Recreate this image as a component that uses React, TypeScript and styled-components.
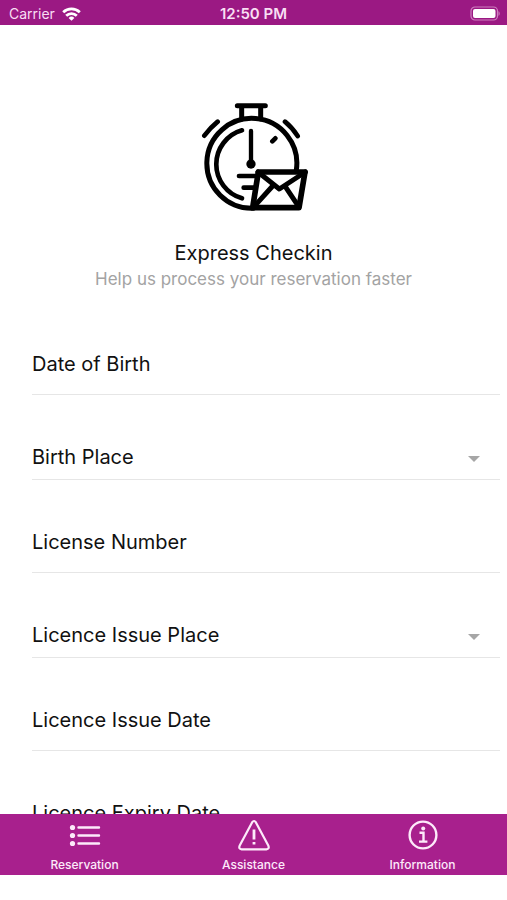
import React from 'react';
import styled, { createGlobalStyle } from 'styled-components';

const GlobalStyle = createGlobalStyle`
  *, *::before, *::after { box-sizing: border-box; }
  body {
    margin: 0;
    background: #fff;
    color: #111;
    font-family: Inter, "Liberation Sans", sans-serif;
  }
`;

const Screen = styled.div`
  display: flex;
  flex-direction: column;
  height: 100vh;
  padding-bottom: 25px;
`;

const StatusBar = styled.header`
  display: grid;
  grid-template-columns: 1fr auto 1fr;
  align-items: center;
  flex: none;
  height: 25px;
  padding: 2px 7px 0;
  background: #9b1983;
  color: #f8dff3;
  font-size: 14px;
  line-height: 20px;
`;

const Carrier = styled.div`
  display: flex;
  align-items: center;
  gap: 7px;
  padding-left: 2px;
`;

const Clock = styled.time`
  font-size: 15px;
  font-weight: 600;
`;

const BatteryIcon = styled.svg`
  justify-self: end;
`;

const Content = styled.main`
  flex: 1;
  min-height: 0;
  overflow: hidden auto;
  scrollbar-width: none;
  padding-top: 77px;
`;

const Intro = styled.section`
  display: flex;
  flex-direction: column;
  align-items: center;
  text-align: center;
`;

const Title = styled.h1`
  margin: 28px 0 0;
  font-size: 20px;
  font-weight: 400;
  line-height: 26px;
`;

const Subtitle = styled.p`
  margin: 0;
  color: #a3a3a3;
  font-size: 17px;
  line-height: 26px;
`;

const Form = styled.form`
  padding: 10px 7px 0 32px;
`;

const Field = styled.div<{ $compact?: boolean }>`
  display: flex;
  align-items: center;
  padding: 50px 20px ${(p) => (p.$compact ? 10 : 18)}px 0;
  border-bottom: 1px solid #e6e6e6;
`;

const FieldLabel = styled.label`
  flex: none;
  font-size: 20px;
  line-height: 24px;
`;

const TextInput = styled.input`
  flex: 1;
  min-width: 0;
  height: 24px;
  padding: 0 0 0 12px;
  border: 0;
  outline: 0;
  background: transparent;
  font: inherit;
`;

const Select = styled.select`
  flex: 1;
  min-width: 0;
  height: 24px;
  padding: 0 12px;
  border: 0;
  outline: 0;
  appearance: none;
  background: transparent;
  font: inherit;
`;

const TabBar = styled.nav`
  display: grid;
  grid-template-columns: repeat(3, 1fr);
  flex: none;
  height: 61px;
  background: #a8208d;
`;

const Tab = styled.a`
  display: flex;
  flex-direction: column;
  align-items: center;
  gap: 6px;
  padding-top: 5px;
  color: #fdeafa;
  font-size: 12px;
  font-weight: 500;
  line-height: 16px;
  text-decoration: none;
`;

const WifiIcon = () => (
  <svg width="19" height="14" viewBox="0 0 19 14" fill="none" stroke="#fff" strokeWidth="2.8" aria-hidden="true">
    <path d="M1.2 5.2a12 12 0 0 1 16.6 0" />
    <path d="M4.2 8.7a7.6 7.6 0 0 1 10.6 0" />
    <path d="M9.5 13.8 6.6 10.9a4.2 4.2 0 0 1 5.8 0z" fill="#fff" stroke="none" />
  </svg>
);

const Battery = () => (
  <BatteryIcon width="30" height="15" viewBox="0 0 30 15" role="img" aria-label="Battery full">
    <rect x="1" y="1" width="26.5" height="13" rx="4" fill="none" stroke="#cf7fc0" strokeWidth="1.2" />
    <rect x="3" y="3" width="22.5" height="9" rx="2" fill="#fff" />
    <path d="M28.5 5.2c1.6.6 1.6 4 0 4.6z" fill="#cf7fc0" />
  </BatteryIcon>
);

const StopwatchMail = () => (
  <svg
    width="121"
    height="110"
    viewBox="9 36 363 330"
    fill="none"
    stroke="#000"
    strokeWidth="15"
    strokeLinecap="round"
    strokeLinejoin="round"
    aria-hidden="true"
  >
    <path d="M142 47h84M155 47v40M212 47v40" />
    <path d="M319 240A135 135 0 1 0 190 355" />
    <path d="M156 121A106 106 0 0 0 156 325" strokeWidth="14" />
    <path d="M183 123v98" strokeWidth="13" />
    <circle cx="183" cy="222" r="14" fill="#000" stroke="none" />
    <path d="M83 95Q61 113 43 137M285 95Q306 112 323 138M247 154l9-9" strokeWidth="14" />
    <path d="M147 258h53M161 293h35" strokeWidth="14" />
    <path d="M205 246H345L327 353H188Z" fill="#fff" strokeWidth="17" />
    <path d="M204 246l64 51 78-51M248 288l-56 62M286 290l40 60" />
  </svg>
);

const Caret = () => (
  <svg width="12" height="10" viewBox="0 0 12 10" aria-hidden="true">
    <path d="M0 4h12L6 10z" fill="#a6a6a6" />
  </svg>
);

const ListIcon = () => (
  <svg width="32" height="32" viewBox="0 0 32 32" fill="none" stroke="#fdeafa" strokeWidth="2.4" strokeLinecap="round" aria-hidden="true">
    <path d="M9.5 8.5h20.5M9.5 16.5h20.5M9.5 24.5h20.5" />
    <g fill="#fdeafa" stroke="none">
      <circle cx="3.5" cy="8.5" r="2.6" />
      <circle cx="3.5" cy="16.5" r="2.6" />
      <circle cx="3.5" cy="24.5" r="2.6" />
    </g>
  </svg>
);

const WarningIcon = () => (
  <svg width="32" height="32" viewBox="0 0 32 32" fill="none" stroke="#fdeafa" strokeWidth="2.2" strokeLinejoin="round" aria-hidden="true">
    <path d="M14.2 3.2Q16 .8 17.8 3.2L30.4 26.8Q31.6 30 28.4 30.3H3.6Q.4 30 1.6 26.8Z" />
    <path d="M16 10.5v10M16 23v2.6" strokeWidth="2.8" />
  </svg>
);

const InfoIcon = () => (
  <svg width="32" height="32" viewBox="0 0 32 32" fill="none" stroke="#fdeafa" strokeWidth="2.4" aria-hidden="true">
    <circle cx="16" cy="16" r="13.4" />
    <path d="M12.5 13.8h4v8.6M12 22.6h8.4" />
    <circle cx="16.2" cy="9.4" r="2" fill="#fdeafa" stroke="none" />
  </svg>
);

type FieldSpec = { id: string; label: string; select?: boolean };

const fields: FieldSpec[] = [
  { id: 'birth-date', label: 'Date of Birth' },
  { id: 'birth-place', label: 'Birth Place', select: true },
  { id: 'license-number', label: 'License Number' },
  { id: 'issue-place', label: 'Licence Issue Place', select: true },
  { id: 'issue-date', label: 'Licence Issue Date' },
  { id: 'expiry-date', label: 'Licence Expiry Date' },
];

const tabs = [
  { label: 'Reservation', href: '#reservation', Icon: ListIcon },
  { label: 'Assistance', href: '#assistance', Icon: WarningIcon },
  { label: 'Information', href: '#information', Icon: InfoIcon },
];

export default function App() {
  return (
    <Screen>
      <GlobalStyle />
      <StatusBar>
        <Carrier>
          Carrier
          <WifiIcon />
        </Carrier>
        <Clock>12:50 PM</Clock>
        <Battery />
      </StatusBar>
      <Content>
        <Intro>
          <StopwatchMail />
          <Title>Express Checkin</Title>
          <Subtitle>Help us process your reservation faster</Subtitle>
        </Intro>
        <Form>
          {fields.map(({ id, label, select }) => (
            <Field key={id} $compact={select}>
              <FieldLabel htmlFor={id}>{label}</FieldLabel>
              {select ? (
                <>
                  <Select id={id} defaultValue="">
                    <option value="" />
                  </Select>
                  <Caret />
                </>
              ) : (
                <TextInput id={id} type="text" />
              )}
            </Field>
          ))}
        </Form>
      </Content>
      <TabBar aria-label="Main">
        {tabs.map(({ label, href, Icon }) => (
          <Tab key={label} href={href}>
            <Icon />
            {label}
          </Tab>
        ))}
      </TabBar>
    </Screen>
  );
}
